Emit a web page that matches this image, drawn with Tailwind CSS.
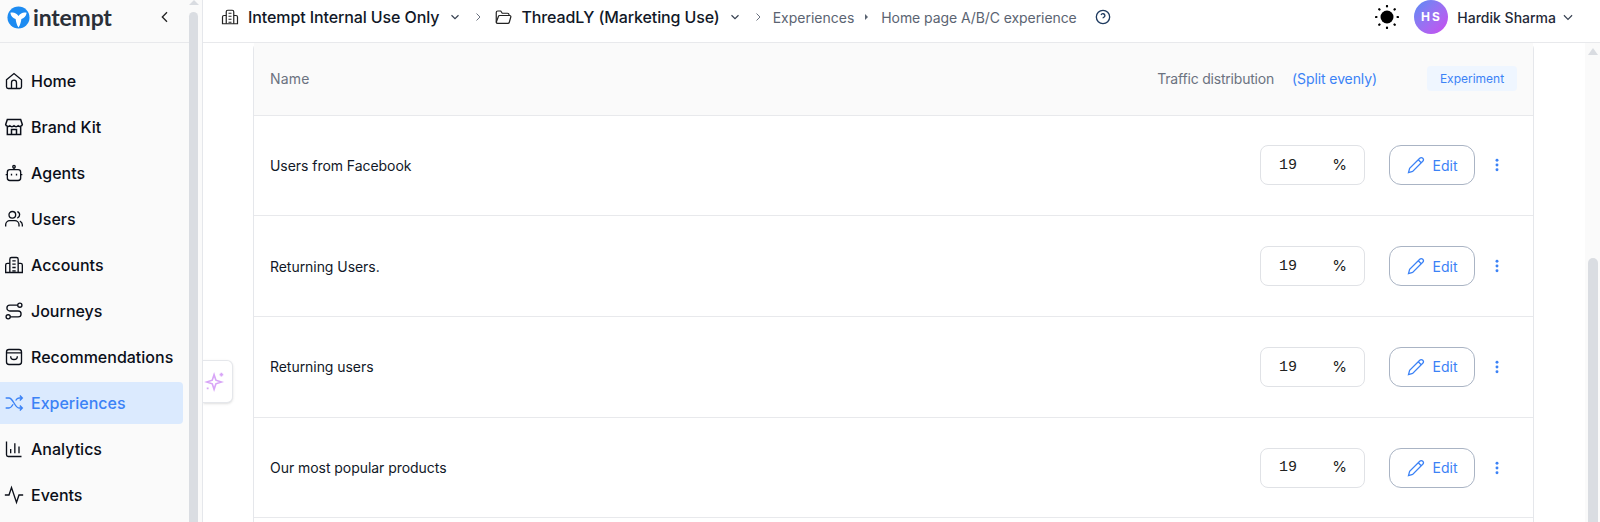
<!DOCTYPE html>
<html lang="en">
<head>
    <meta charset="UTF-8">
    <title>Home page A/B/C experience</title>
    <script src="https://cdn.jsdelivr.net/npm/@tailwindcss/browser@4"></script>
</head>
<body class="h-[522px] w-[1600px] overflow-hidden bg-white font-['Inter',sans-serif] text-black">
<div class="flex h-full">

    <!-- sidebar -->
    <aside class="flex h-full w-[203px] shrink-0 border-r border-[#e5e7eb] bg-[#fafafa]">
        <div class="w-[189px] shrink-0">
            <div class="flex h-[43px] items-center justify-between border-b border-[#e8e9ec] pb-[8px] pl-[7px] pr-[16px]">
                <div class="flex items-center gap-[3px]">
                    <svg class="h-[23px] w-[23px]" viewBox="0 0 24 24"><circle cx="12" cy="12" r="11.500" fill="#1d8bf1"/><path d="M3.500 7c3.500-1 6.500 .5 8.500 3.500 2-3 5-4.500 8.500-3.500-.5 4-3 6-5.500 6.500-.5 3-1 6-3 9-2-3-2.500-6-3-9-2.500-.5-5-2.500-5.500-6.500z" fill="#fff"/></svg>
                    <span class="text-[23px] leading-none font-bold tracking-[-0.2px] text-[#2a2f38] font-['Lato',sans-serif]">intempt</span>
                </div>
                <svg class="h-4 w-4 text-[#222]" viewBox="0 0 24 24" fill="none" stroke="currentColor" stroke-width="2"><path d="M15 5l-7 7 7 7"/></svg>
            </div>
            <nav class="flex flex-col pt-[15px] text-[16px] font-medium text-[#0b0f19]">
                <a class="flex h-[46px] items-center gap-[7px] pl-[4px]">
                    <svg class="h-[20px] w-[20px]" viewBox="0 0 24 24" fill="none" stroke="currentColor" stroke-width="1.600"><path d="M3 10.500 12 3l9 7.500V19a2 2 0 0 1-2 2H5a2 2 0 0 1-2-2z"/><path d="M9 21v-7a3 3 0 0 1 6 0v7"/></svg>
                    Home
                </a>
                <a class="flex h-[46px] items-center gap-[7px] pl-[4px]">
                    <svg class="h-[20px] w-[20px]" viewBox="0 0 24 24" fill="none" stroke="currentColor" stroke-width="1.800"><path d="M4 3h16l2 6a3 3 0 0 1-5 1.500 3.500 3.500 0 0 1-5 0 3.500 3.500 0 0 1-5 0A3 3 0 0 1 2 9z"/><path d="M4 12v9h16v-9M9 21v-6h6v6"/></svg>
                    Brand Kit
                </a>
                <a class="flex h-[46px] items-center gap-[7px] pl-[4px]">
                    <svg class="h-[20px] w-[20px]" viewBox="0 0 24 24" fill="none" stroke="currentColor" stroke-width="1.600"><rect x="4" y="8" width="16" height="13" rx="3"/><circle cx="12" cy="4.500" r="1.500"/><path d="M12 6v2M2 14h2M20 14h2M9 13v2M15 13v2"/></svg>
                    Agents
                </a>
                <a class="flex h-[46px] items-center gap-[7px] pl-[4px]">
                    <svg class="h-[20px] w-[20px]" viewBox="0 0 24 24" fill="none" stroke="currentColor" stroke-width="1.600"><circle cx="10" cy="7" r="4"/><path d="M2 21v-2a5 5 0 0 1 5-5h6a5 5 0 0 1 5 5v2M16 3.200a4 4 0 0 1 0 7.600M22 21v-2a5 5 0 0 0-3-4.500"/></svg>
                    Users
                </a>
                <a class="flex h-[46px] items-center gap-[7px] pl-[4px]">
                    <svg class="h-[20px] w-[20px]" viewBox="0 0 24 24" fill="none" stroke="currentColor" stroke-width="1.600"><path d="M7 21V5a2 2 0 0 1 2-2h6a2 2 0 0 1 2 2v16"/><path d="M7 10H4a2 2 0 0 0-2 2v9h20v-9a2 2 0 0 0-2-2h-3M10 7h4M10 11h4M10 15h4M10 19h4"/></svg>
                    Accounts
                </a>
                <a class="flex h-[46px] items-center gap-[7px] pl-[4px]">
                    <svg class="h-[20px] w-[20px]" viewBox="0 0 24 24" fill="none" stroke="currentColor" stroke-width="1.600"><circle cx="19" cy="5" r="2.500"/><circle cx="5" cy="19" r="2.500"/><path d="M16.500 5H7a3.500 3.500 0 0 0 0 7h10a3.500 3.500 0 0 1 0 7H7.500"/></svg>
                    Journeys
                </a>
                <a class="flex h-[46px] items-center gap-[7px] pl-[4px]">
                    <svg class="h-[20px] w-[20px]" viewBox="0 0 24 24" fill="none" stroke="currentColor" stroke-width="1.600"><rect x="3" y="3" width="18" height="18" rx="3"/><path d="M3 7h18M8 11a4 4 0 0 0 8 0"/></svg>
                    Recommendations
                </a>
                <a class="my-[2px] flex h-[42px] w-[183px] items-center gap-[7px] rounded-r-[4px] bg-[#dbeafe] pl-[4px] text-[#3b82f6]">
                    <svg class="h-[20px] w-[20px]" viewBox="0 0 24 24" fill="none" stroke="currentColor" stroke-width="1.600"><path d="M2 6h4c5 0 7 12 12 12h4M2 18h4c2 0 3.500-2 5-4.500M14 9c1-1.700 2.200-3 4-3h4M19 3l3 3-3 3M19 15l3 3-3 3"/></svg>
                    Experiences
                </a>
                <a class="flex h-[46px] items-center gap-[7px] pl-[4px]">
                    <svg class="h-[20px] w-[20px]" viewBox="0 0 24 24" fill="none" stroke="currentColor" stroke-width="1.600"><path d="M3 3v16a2 2 0 0 0 2 2h16M8 17v-5M13 17V5M18 17v-8"/></svg>
                    Analytics
                </a>
                <a class="flex h-[46px] items-center gap-[7px] pl-[4px]">
                    <svg class="h-[20px] w-[20px]" viewBox="0 0 24 24" fill="none" stroke="currentColor" stroke-width="1.600"><path d="M1 12h5l3-9 6 18 3-9h5"/></svg>
                    Events
                </a>
            </nav>
        </div>
        <!-- sidebar scrollbar -->
        <div class="flex w-[9px] flex-col items-center">
            <div class="h-0 w-0 border-x-[5px] border-b-[5px] border-x-transparent border-b-[#d9dce1]"></div>
            <div class="mt-[7px] h-full w-[9px] rounded-t-[5px] bg-[#dadde2]"></div>
        </div>
    </aside>

    <!-- main -->
    <div class="flex min-w-0 flex-1 flex-col">
        <header class="flex h-[43px] shrink-0 items-center border-b border-[#e8e9ec] pb-[8px] pl-[18px] pr-[26px]">
            <svg class="h-[18px] w-[18px] text-[#222]" viewBox="0 0 24 24" fill="none" stroke="currentColor" stroke-width="1.600"><path d="M7 21V5a2 2 0 0 1 2-2h6a2 2 0 0 1 2 2v16"/><path d="M7 10H4a2 2 0 0 0-2 2v9h20v-9a2 2 0 0 0-2-2h-3M10 7h4M10 11h4M10 15h4M10 19h4"/></svg>
            <span class="ml-[9px] text-[16px] font-medium tracking-[-0.1px] text-[#111827]">Intempt Internal Use Only</span>
            <svg class="ml-[9px] h-[14px] w-[14px] text-[#374151]" viewBox="0 0 24 24" fill="none" stroke="currentColor" stroke-width="2"><path d="M6 9l6 6 6-6"/></svg>
            <svg class="ml-[10px] h-3 w-3 text-[#6b7280]" viewBox="0 0 24 24" fill="none" stroke="currentColor" stroke-width="2"><path d="M9 5l7 7-7 7"/></svg>
            <svg class="ml-[10px] h-[18px] w-[18px] text-[#222]" viewBox="0 0 24 24" fill="none" stroke="currentColor" stroke-width="1.600"><path d="M3 19V6a2 2 0 0 1 2-2h4l2 3h7a2 2 0 0 1 2 2v1"/><path d="M3 19l3-8a1.500 1.500 0 0 1 1.500-1H21a1.500 1.500 0 0 1 1.400 2l-2 7a2 2 0 0 1-2 1.500H5a2 2 0 0 1-2-1.500z"/></svg>
            <span class="ml-[9px] text-[16px] font-medium tracking-[-0.12px] text-[#111827]">ThreadLY (Marketing Use)</span>
            <svg class="ml-[8px] h-[14px] w-[14px] text-[#374151]" viewBox="0 0 24 24" fill="none" stroke="currentColor" stroke-width="2"><path d="M6 9l6 6 6-6"/></svg>
            <svg class="ml-[10px] h-3 w-3 text-[#6b7280]" viewBox="0 0 24 24" fill="none" stroke="currentColor" stroke-width="2"><path d="M9 5l7 7-7 7"/></svg>
            <span class="ml-[9px] text-[14px] text-[#5b6472]">Experiences</span>
            <span class="ml-[11px] h-0 w-0 border-y-[3px] border-l-[3px] border-y-transparent border-l-[#5b6472]"></span>
            <span class="ml-[13px] text-[14px] tracking-[-0.08px] text-[#5b6472]">Home page A/B/C experience</span>
            <svg class="ml-[18px] h-[16px] w-[16px] text-[#1e3a5f]" viewBox="0 0 24 24" fill="none" stroke="currentColor" stroke-width="2"><circle cx="12" cy="12" r="10"/><path d="M9.100 9a3 3 0 0 1 5.800 1c0 2-3 2.500-3 4M12 17.500v.1"/></svg>

            <div class="ml-auto flex items-center">
                <svg class="h-[24px] w-[24px] text-black" viewBox="0 0 24 24" fill="currentColor" stroke="currentColor" stroke-width="2.200" stroke-linecap="round"><circle cx="12" cy="12" r="6.500" stroke="none"/><path d="M12 1v.5M12 22.500v.5M1 12h.5M22.500 12h.5M4.200 4.200l.3.3M19.500 19.500l.3.300M4.200 19.800l.3-.3M19.500 4.500l.3-.3"/></svg>
                <div class="ml-[15px] flex h-[34px] w-[34px] items-center justify-center rounded-full bg-gradient-to-br from-[#4f8bf5] to-[#c946ef] text-[12px] font-bold tracking-[2px] text-white">HS</div>
                <span class="ml-[9px] text-[14px] font-medium text-[#1f2937]">Hardik Sharma</span>
                <svg class="ml-[5px] mr-[-1px] h-[14px] w-[14px] text-[#374151]" viewBox="0 0 24 24" fill="none" stroke="currentColor" stroke-width="2"><path d="M5 9l7 7 7-7"/></svg>
            </div>
        </header>

        <div class="relative flex min-h-0 flex-1 justify-between overflow-hidden">
            <!-- assistant tab -->
            <div class="absolute left-0 top-[317px] flex h-[43px] w-[30px] items-center rounded-r-[6px] border border-l-0 border-[#e5e7eb] bg-white pl-[1px] shadow-sm">
                <svg class="h-[22px] w-[22px] text-[#d8a6f7]" viewBox="0 0 24 24" fill="none" stroke="currentColor" stroke-width="1.800"><path d="M11 4l2 6 6 2-6 2-2 6-2-6-6-2 6-2z"/><path d="M19 2v4M17 4h4M4 18v2M3 19h2"/></svg>
            </div>

            <!-- experiments table -->
            <div class="ml-[50px] w-[1281px] shrink-0 rounded-t-[6px] border-x border-[#e5e7eb]">
                <div class="flex h-[72.6px] items-center border-b border-[#e8e9ec] bg-[#fafafa] pl-[16px] pr-[16px] text-[14px]">
                    <span class="tracking-[0.2px] text-[#6b7280]">Name</span>
                    <span class="ml-auto tracking-[-0.2px] text-[#6b7280]">Traffic distribution</span>
                    <span class="ml-[18px] tracking-[-0.1px] text-[#3b82f6]">(Split evenly)</span>
                    <span class="ml-[50px] flex h-[25px] w-[90px] items-center justify-center rounded-[4px] bg-[#eff6ff] text-[12px] text-[#3b82f6]">Experiment</span>
                </div>

                <div class="flex h-[100.7px] items-center border-b border-[#e8e9ec] pl-[16px] pr-[28px]">
                    <span class="text-[14px] tracking-[-0.05px] text-[#111827]">Users from Facebook</span>
                    <div class="ml-auto flex h-[40px] w-[105px] items-center justify-between rounded-[8px] border border-[#e0e2e6] pl-[18px] pr-[17px] text-[15px] text-[#222]">
                        <span class="pt-[2px] font-['Liberation_Mono',monospace]">19</span><span>%</span>
                    </div>
                    <button class="ml-[24px] flex h-[40px] w-[86px] items-center justify-center gap-[8px] rounded-[12px] border border-[#aab4c4] text-[14px] text-[#3b82f6]">
                        <svg class="h-[18px] w-[18px]" viewBox="0 0 24 24" fill="none" stroke="currentColor" stroke-width="1.700"><path d="M17 3a2.800 2.800 0 0 1 4 4L7.500 20.500 2 22l1.500-5.500z"/><path d="M15 5l4 4"/></svg>
                        Edit
                    </button>
                    <svg class="ml-[14px] h-[16px] w-[16px] text-[#3b82f6]" viewBox="0 0 24 24" fill="currentColor"><circle cx="12" cy="5" r="2.200"/><circle cx="12" cy="12" r="2.200"/><circle cx="12" cy="19" r="2.200"/></svg>
                </div>

                <div class="flex h-[100.7px] items-center border-b border-[#e8e9ec] pl-[16px] pr-[28px]">
                    <span class="text-[14px] tracking-[-0.05px] text-[#111827]">Returning Users.</span>
                    <div class="ml-auto flex h-[40px] w-[105px] items-center justify-between rounded-[8px] border border-[#e0e2e6] pl-[18px] pr-[17px] text-[15px] text-[#222]">
                        <span class="pt-[2px] font-['Liberation_Mono',monospace]">19</span><span>%</span>
                    </div>
                    <button class="ml-[24px] flex h-[40px] w-[86px] items-center justify-center gap-[8px] rounded-[12px] border border-[#aab4c4] text-[14px] text-[#3b82f6]">
                        <svg class="h-[18px] w-[18px]" viewBox="0 0 24 24" fill="none" stroke="currentColor" stroke-width="1.700"><path d="M17 3a2.800 2.800 0 0 1 4 4L7.500 20.500 2 22l1.500-5.500z"/><path d="M15 5l4 4"/></svg>
                        Edit
                    </button>
                    <svg class="ml-[14px] h-[16px] w-[16px] text-[#3b82f6]" viewBox="0 0 24 24" fill="currentColor"><circle cx="12" cy="5" r="2.200"/><circle cx="12" cy="12" r="2.200"/><circle cx="12" cy="19" r="2.200"/></svg>
                </div>

                <div class="flex h-[100.7px] items-center border-b border-[#e8e9ec] pl-[16px] pr-[28px]">
                    <span class="text-[14px] tracking-[-0.05px] text-[#111827]">Returning users</span>
                    <div class="ml-auto flex h-[40px] w-[105px] items-center justify-between rounded-[8px] border border-[#e0e2e6] pl-[18px] pr-[17px] text-[15px] text-[#222]">
                        <span class="pt-[2px] font-['Liberation_Mono',monospace]">19</span><span>%</span>
                    </div>
                    <button class="ml-[24px] flex h-[40px] w-[86px] items-center justify-center gap-[8px] rounded-[12px] border border-[#aab4c4] text-[14px] text-[#3b82f6]">
                        <svg class="h-[18px] w-[18px]" viewBox="0 0 24 24" fill="none" stroke="currentColor" stroke-width="1.700"><path d="M17 3a2.800 2.800 0 0 1 4 4L7.500 20.500 2 22l1.500-5.500z"/><path d="M15 5l4 4"/></svg>
                        Edit
                    </button>
                    <svg class="ml-[14px] h-[16px] w-[16px] text-[#3b82f6]" viewBox="0 0 24 24" fill="currentColor"><circle cx="12" cy="5" r="2.200"/><circle cx="12" cy="12" r="2.200"/><circle cx="12" cy="19" r="2.200"/></svg>
                </div>

                <div class="flex h-[100.7px] items-center border-b border-[#e8e9ec] pl-[16px] pr-[28px]">
                    <span class="text-[14px] tracking-[-0.05px] text-[#111827]">Our most popular products</span>
                    <div class="ml-auto flex h-[40px] w-[105px] items-center justify-between rounded-[8px] border border-[#e0e2e6] pl-[18px] pr-[17px] text-[15px] text-[#222]">
                        <span class="pt-[2px] font-['Liberation_Mono',monospace]">19</span><span>%</span>
                    </div>
                    <button class="ml-[24px] flex h-[40px] w-[86px] items-center justify-center gap-[8px] rounded-[12px] border border-[#aab4c4] text-[14px] text-[#3b82f6]">
                        <svg class="h-[18px] w-[18px]" viewBox="0 0 24 24" fill="none" stroke="currentColor" stroke-width="1.700"><path d="M17 3a2.800 2.800 0 0 1 4 4L7.500 20.500 2 22l1.500-5.500z"/><path d="M15 5l4 4"/></svg>
                        Edit
                    </button>
                    <svg class="ml-[14px] h-[16px] w-[16px] text-[#3b82f6]" viewBox="0 0 24 24" fill="currentColor"><circle cx="12" cy="5" r="2.200"/><circle cx="12" cy="12" r="2.200"/><circle cx="12" cy="19" r="2.200"/></svg>
                </div>
            </div>

            <!-- page scrollbar -->
            <div class="flex w-[15px] shrink-0 flex-col items-center bg-[#fafafa]">
                <div class="mt-[5px] h-0 w-0 border-x-[5px] border-b-[7px] border-x-transparent border-b-[#d9dce1]"></div>
                <div class="mt-[203px] h-full w-[10px] rounded-t-[5px] bg-[#dadde2]"></div>
            </div>
        </div>
    </div>
</div>
</body>
</html>
